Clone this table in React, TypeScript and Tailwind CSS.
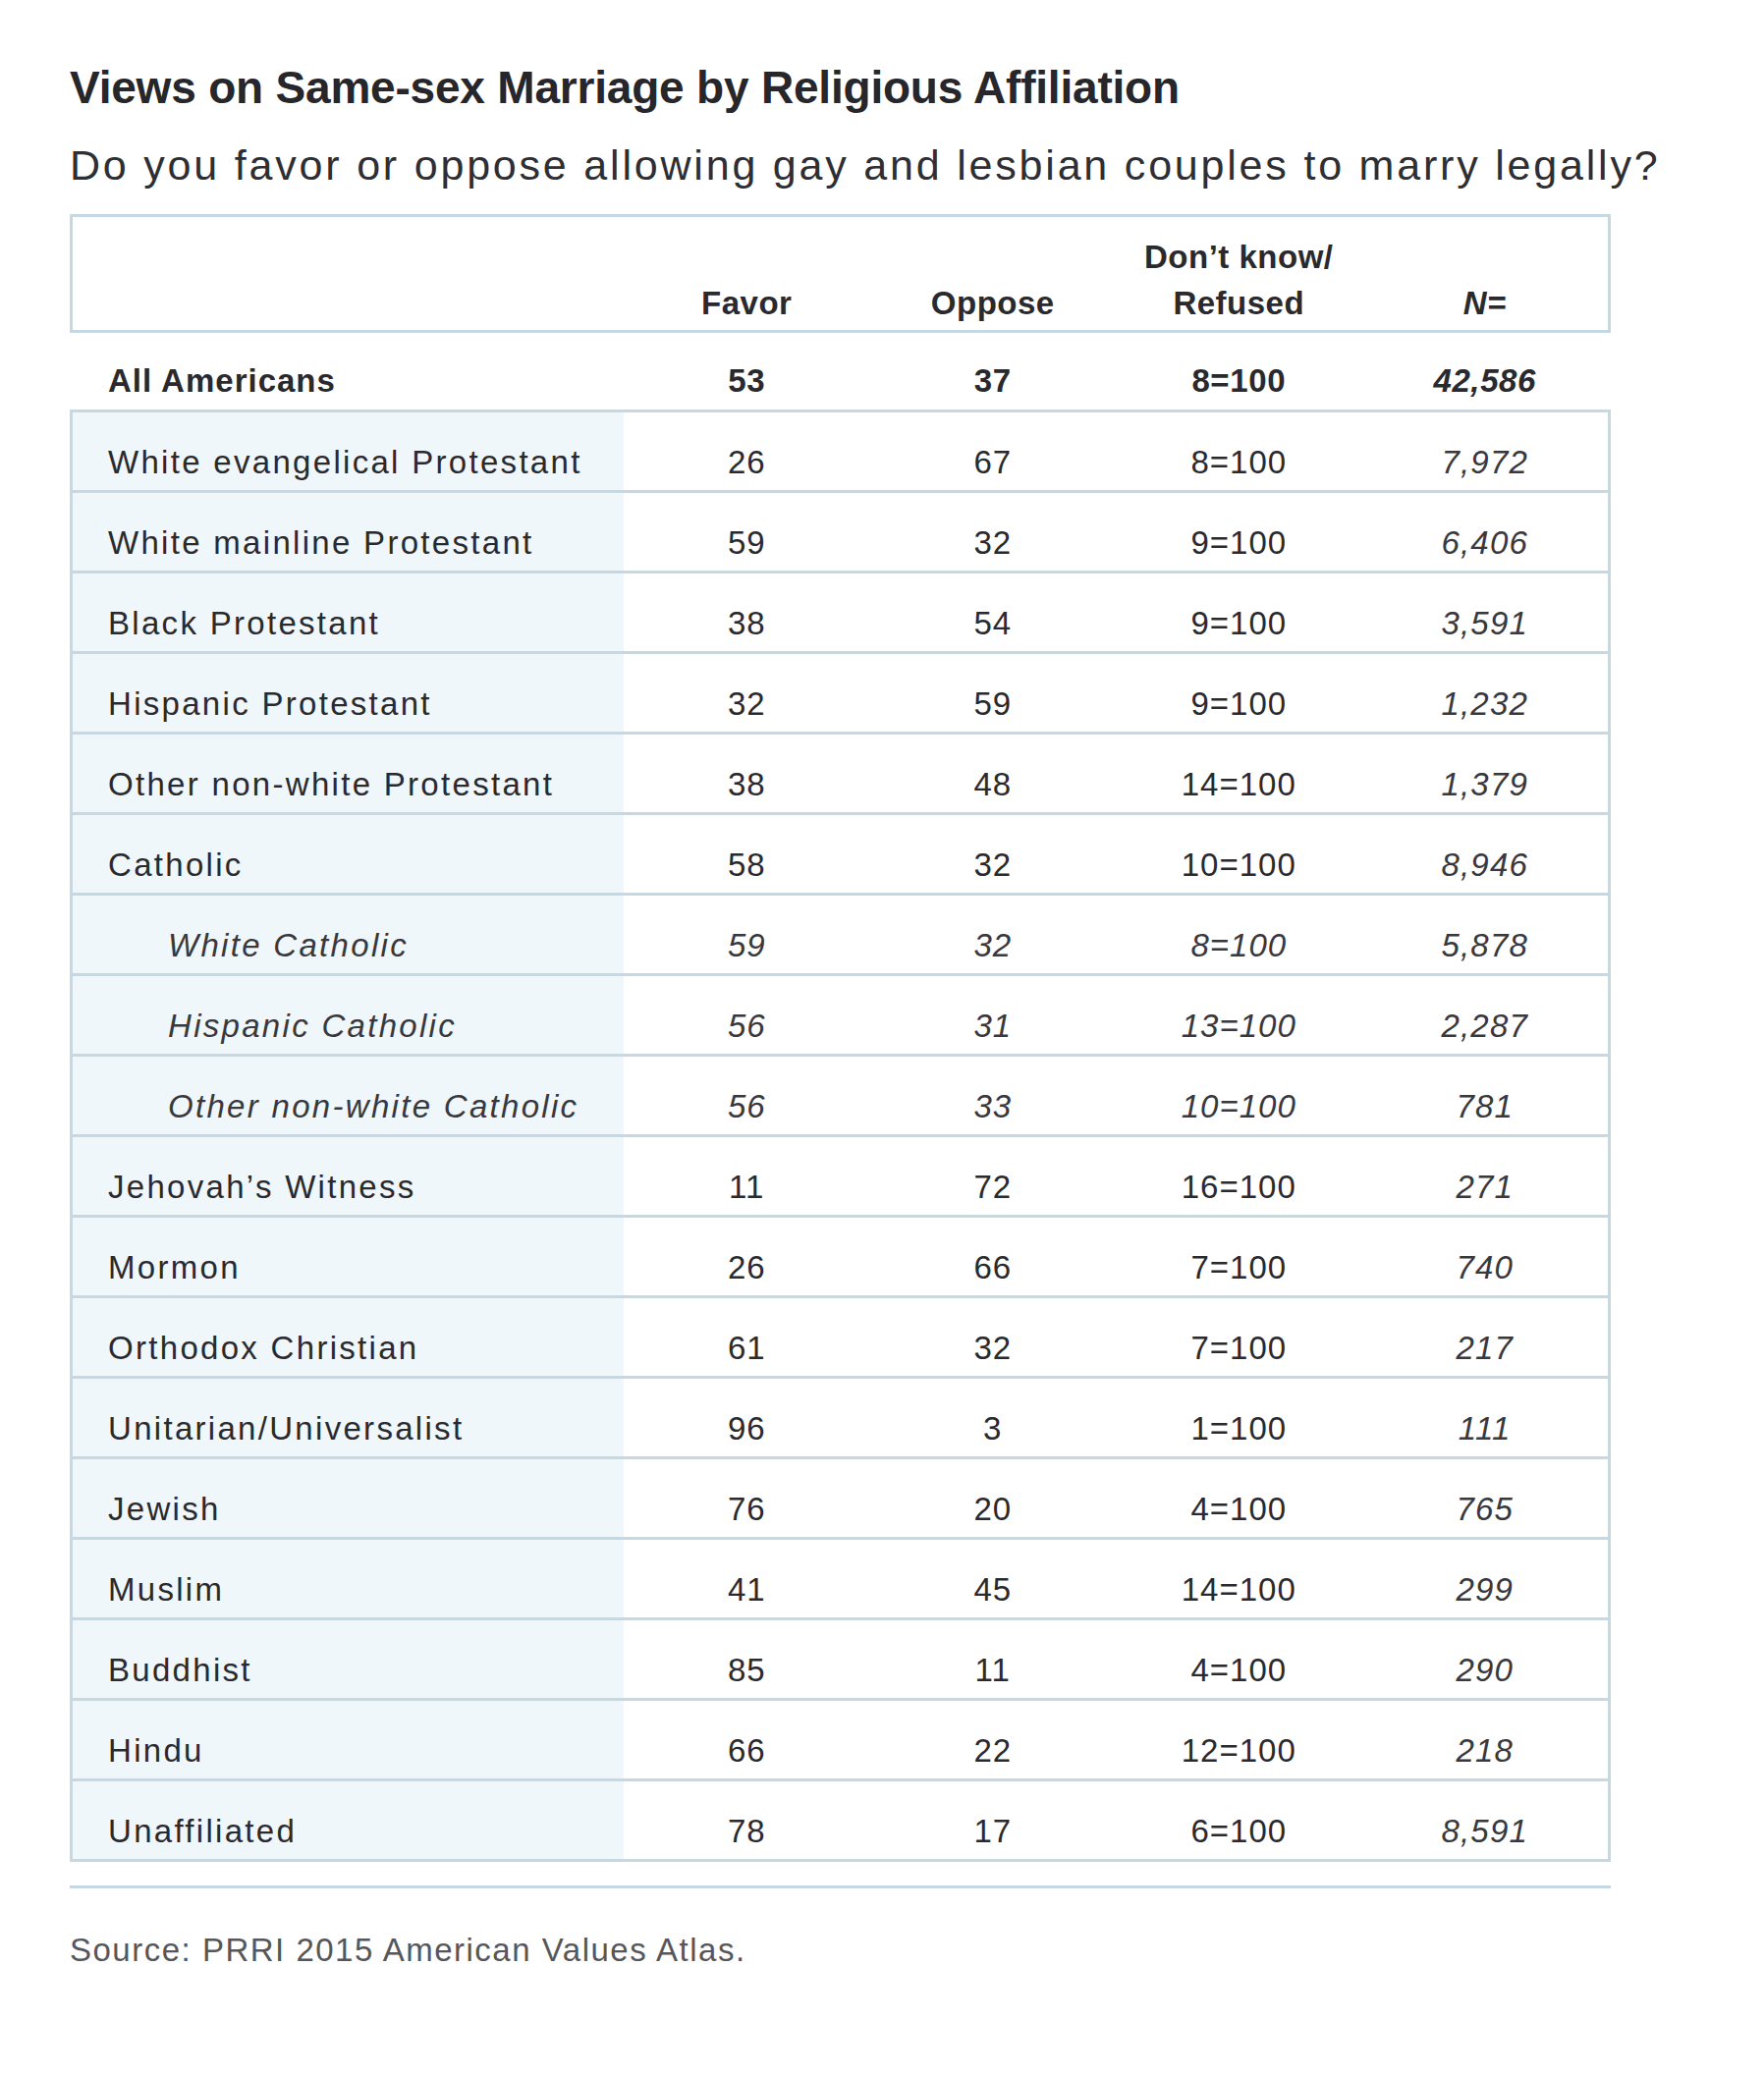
const rows: { label: string; favor: string; oppose: string; dk: string; n: string; sub?: boolean }[] = [
  { label: "White evangelical Protestant", favor: "26", oppose: "67", dk: "8=100", n: "7,972" },
  { label: "White mainline Protestant", favor: "59", oppose: "32", dk: "9=100", n: "6,406" },
  { label: "Black Protestant", favor: "38", oppose: "54", dk: "9=100", n: "3,591" },
  { label: "Hispanic Protestant", favor: "32", oppose: "59", dk: "9=100", n: "1,232" },
  { label: "Other non-white Protestant", favor: "38", oppose: "48", dk: "14=100", n: "1,379" },
  { label: "Catholic", favor: "58", oppose: "32", dk: "10=100", n: "8,946" },
  { label: "White Catholic", favor: "59", oppose: "32", dk: "8=100", n: "5,878", sub: true },
  { label: "Hispanic Catholic", favor: "56", oppose: "31", dk: "13=100", n: "2,287", sub: true },
  { label: "Other non-white Catholic", favor: "56", oppose: "33", dk: "10=100", n: "781", sub: true },
  { label: "Jehovah’s Witness", favor: "11", oppose: "72", dk: "16=100", n: "271" },
  { label: "Mormon", favor: "26", oppose: "66", dk: "7=100", n: "740" },
  { label: "Orthodox Christian", favor: "61", oppose: "32", dk: "7=100", n: "217" },
  { label: "Unitarian/Universalist", favor: "96", oppose: "3", dk: "1=100", n: "111" },
  { label: "Jewish", favor: "76", oppose: "20", dk: "4=100", n: "765" },
  { label: "Muslim", favor: "41", oppose: "45", dk: "14=100", n: "299" },
  { label: "Buddhist", favor: "85", oppose: "11", dk: "4=100", n: "290" },
  { label: "Hindu", favor: "66", oppose: "22", dk: "12=100", n: "218" },
  { label: "Unaffiliated", favor: "78", oppose: "17", dk: "6=100", n: "8,591" },
]

const grid = "grid grid-cols-[561px_repeat(4,1fr)]"

export default function App() {
  return (
    <div className="w-[1796px] h-[2113px] bg-white text-[#2a2a2e] font-['Liberation_Sans',Arial,sans-serif]">
      <div className="pl-[71px] pt-[62px]">
        {/* Title */}
        <h1 className="text-[46px] leading-[54px] font-bold tracking-[-0.2px] text-[#26262b]">
          Views on Same-sex Marriage by Religious Affiliation
        </h1>
        <p className="mt-[26px] text-[43px] leading-[52px] tracking-[2.8px] text-[#2e2e33]">
          Do you favor or oppose allowing gay and lesbian couples to marry legally?
        </p>

        <div className="mt-[24px] w-[1569px]">
          {/* Header */}
          <div className={`${grid} h-[121px] border-[3px] border-[#c4d9e3] items-end pb-[4px] text-[33px] font-bold leading-[47px] tracking-[0.5px]`}>
            <div />
            <div className="text-center">Favor</div>
            <div className="text-center">Oppose</div>
            <div className="text-center">Don’t know/<br />Refused</div>
            <div className="text-center italic">N=</div>
          </div>

          {/* All Americans */}
          <div className={`${grid} h-[78px] pt-[29px] border-x-[3px] border-transparent text-[33px] leading-[40px] font-bold`}>
            <div className="pl-[36px] tracking-[1px]">All Americans</div>
            <div className="text-center tracking-[0.6px]">53</div>
            <div className="text-center tracking-[0.6px]">37</div>
            <div className="text-center tracking-[0.6px]">8=100</div>
            <div className="text-center italic tracking-[0.6px]">42,586</div>
          </div>

          {/* Body */}
          <div className="border-x-[3px] border-t-[3px] border-[#c4d9e3]">
            {rows.map((r) => (
              <div key={r.label} className={`${grid} h-[82px] border-b-[3px] border-[#c4d9e3] text-[33px] leading-[40px]`}>
                <div className={`bg-[#eff7fb] pt-[31px] tracking-[2.3px] ${r.sub ? "pl-[97px] italic text-[#38383d]" : "pl-[36px]"}`}>
                  {r.label}
                </div>
                <div className={`text-center pt-[31px] tracking-[1px] ${r.sub ? "italic text-[#38383d]" : ""}`}>{r.favor}</div>
                <div className={`text-center pt-[31px] tracking-[1px] ${r.sub ? "italic text-[#38383d]" : ""}`}>{r.oppose}</div>
                <div className={`text-center pt-[31px] tracking-[1px] ${r.sub ? "italic text-[#38383d]" : ""}`}>{r.dk}</div>
                <div className="text-center pt-[31px] tracking-[1.2px] italic text-[#38383d]">{r.n}</div>
              </div>
            ))}
          </div>

          <div className="mt-[24px] h-[3px] bg-[#c4d9e3]" />
        </div>

        {/* Source */}
        <p className="mt-[43px] text-[33px] leading-[40px] tracking-[1.5px] text-[#56565b]">
          Source: PRRI 2015 American Values Atlas.
        </p>
      </div>
    </div>
  )
}
